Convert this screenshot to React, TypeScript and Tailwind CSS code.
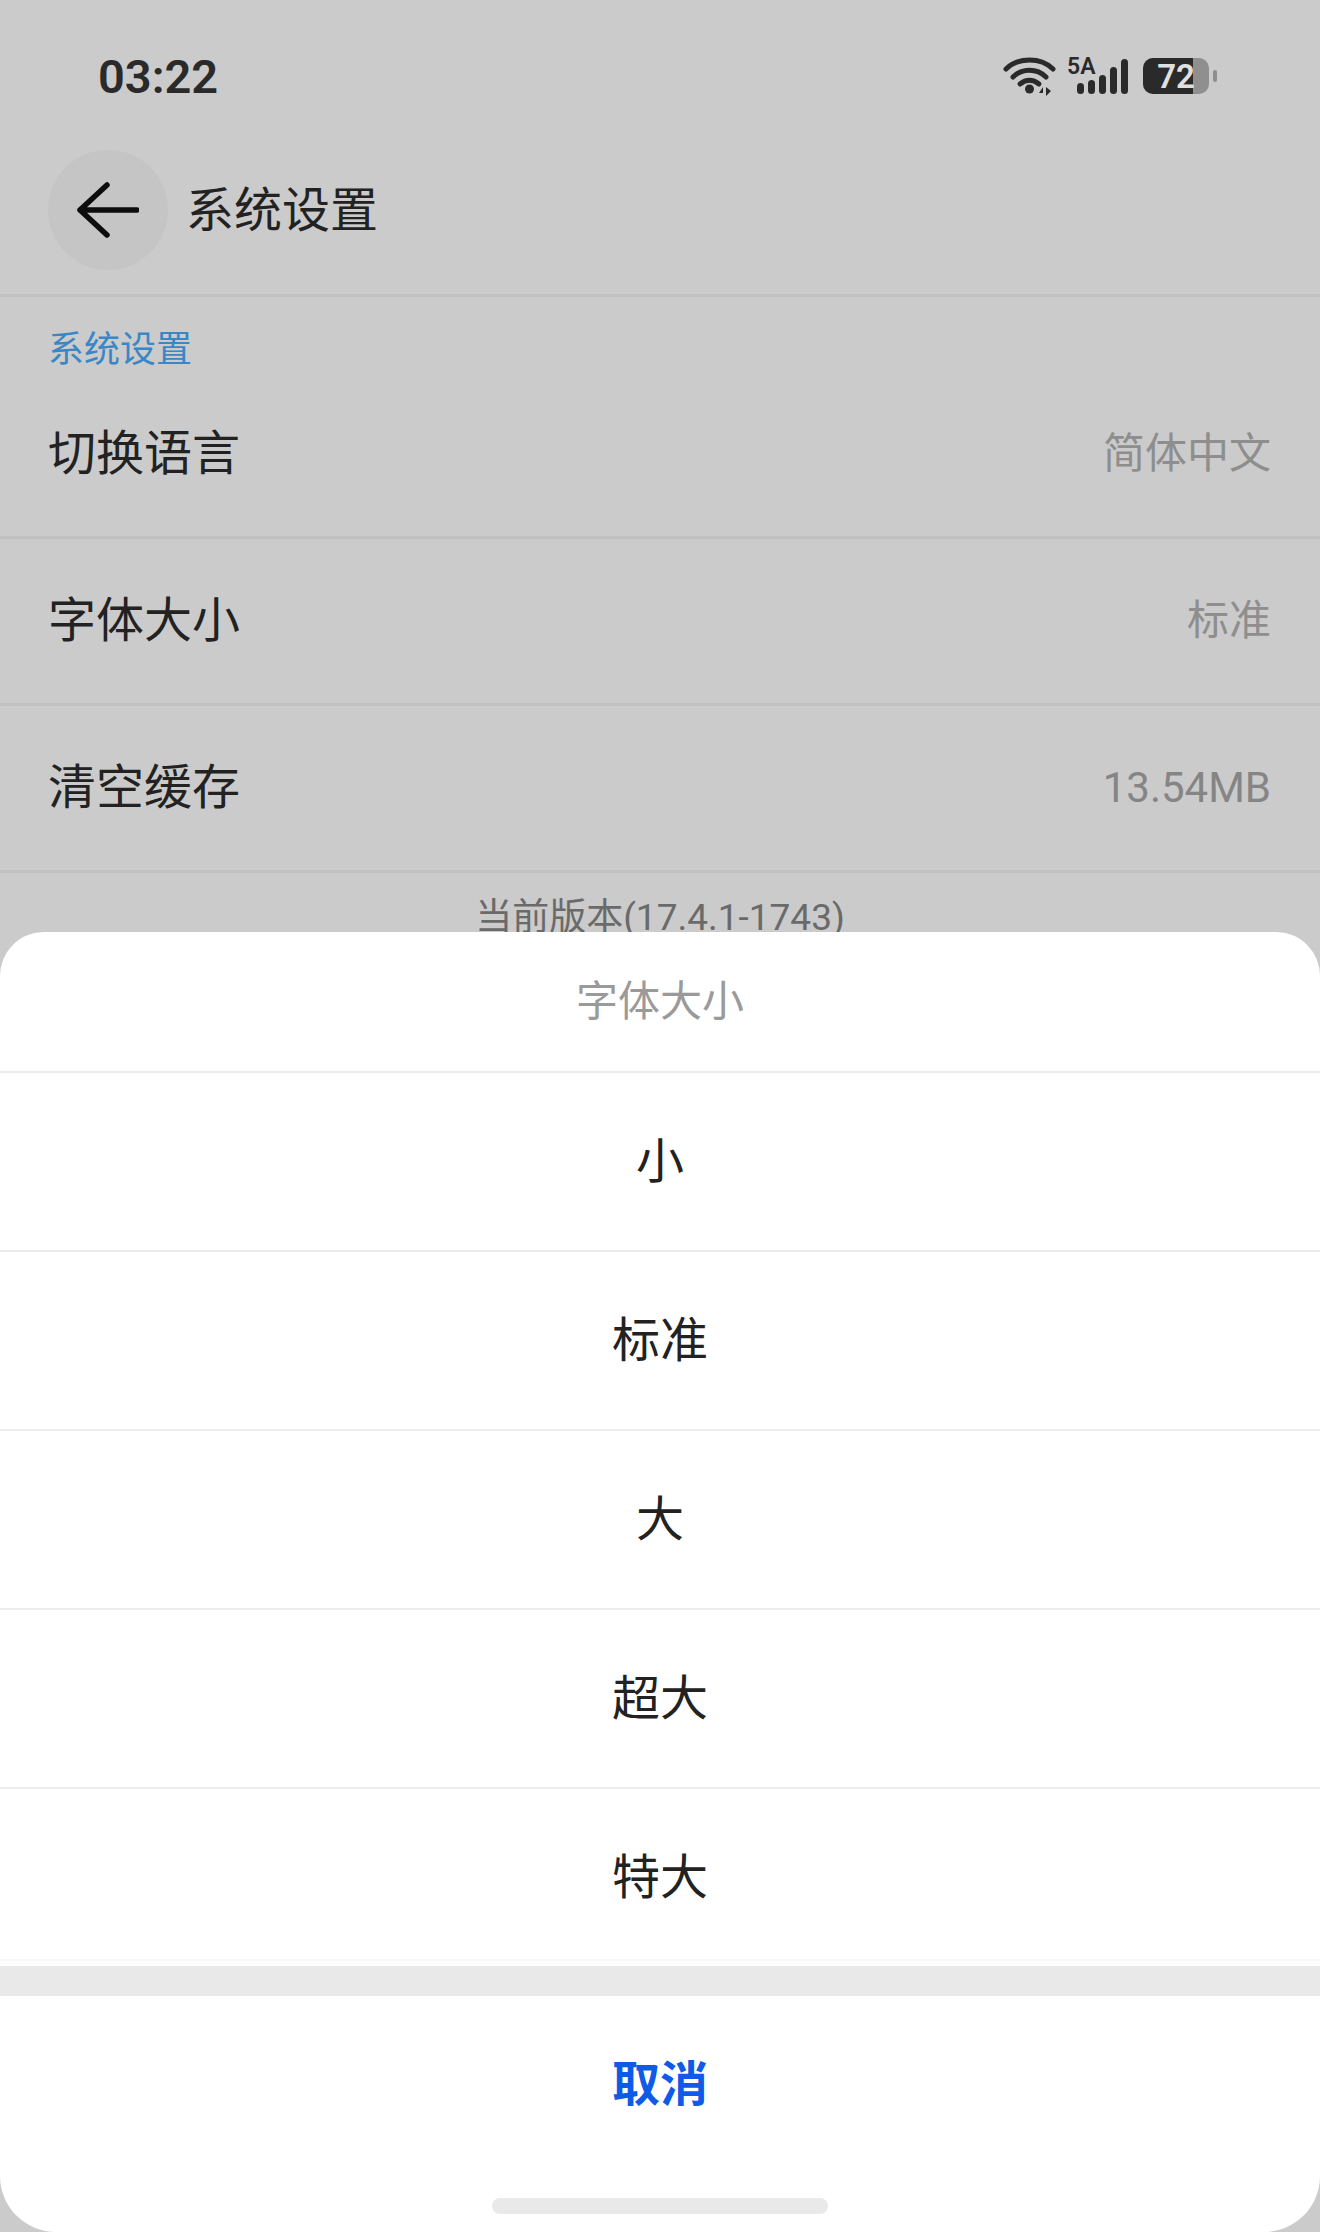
const cjk = "font-['Roboto','Noto_Sans_CJK_SC',sans-serif]";

function Wifi() {
  return (
    <svg width="54" height="40" viewBox="0 0 54 40" fill="none" className="block">
      <path d="M3 13 C15 1 38 1 50 13" stroke="#2a2a2a" strokeWidth="5" strokeLinecap="round" />
      <path d="M10 21 C19 12 34 12 43 21" stroke="#2a2a2a" strokeWidth="5" strokeLinecap="round" />
      <path d="M17 28 C23 23 30 23 36 28" stroke="#2a2a2a" strokeWidth="5" strokeLinecap="round" />
      <circle cx="26.5" cy="33" r="4.5" fill="#2a2a2a" />
      <path d="M36 37 L40 31 V37 Z M43 31 V40 L48 35 Z" fill="#2a2a2a" />
    </svg>
  );
}

function Signal() {
  const bars = [{ h: 11 }, { h: 14 }, { h: 19 }, { h: 27 }, { h: 35 }];
  return (
    <div className="relative w-[58px] h-[36px] flex items-end gap-[4px] justify-end">
      <span className="absolute left-[-3px] top-[-2px] text-[23px] leading-[22px] font-semibold text-[#2a2a2a] font-['Roboto',sans-serif]">5A</span>
      {bars.map((b, i) => (
        <div key={i} className="w-[7px] rounded-full bg-[#2a2a2a]" style={{ height: b.h }} />
      ))}
    </div>
  );
}

function Battery() {
  return (
    <div className="flex items-center gap-[4px]">
      <div className="relative w-[66px] h-[36px] rounded-[10px] overflow-hidden bg-[#8f8f8f] flex">
        <div className="w-[50px] h-full bg-[#2a2a2a]" />
        <span className="absolute inset-0 flex items-center justify-center text-[33px] font-semibold text-[#e0e0e0] font-['Roboto',sans-serif] leading-none">72</span>
      </div>
      <div className="w-[4px] h-[12px] rounded-full bg-[#8f8f8f]" />
    </div>
  );
}

function SettingRow({ label, value, h, latin }: { label: string; value: string; h: string; latin?: boolean }) {
  return (
    <div className={`${h} flex items-center justify-between pl-[48px] pr-[49px] border-b-[3px] border-[#c1c1c1]`}>
      <span className="text-[48px] leading-none text-[#222222]">{label}</span>
      <span className={`${latin ? "text-[42px] text-[#858585]" : "text-[42px] text-[#8e8e8e]"} leading-none`}>{value}</span>
    </div>
  );
}

function Option({ text, className = "h-[179px] border-[#ececec]" }: { text: string; className?: string }) {
  return (
    <div className={`${className} flex items-center justify-center border-b-2 text-[48px] leading-none text-[#222222]`}>
      {text}
    </div>
  );
}

export default function App() {
  return (
    <div className={`relative w-[1320px] h-[2232px] overflow-hidden bg-[#cbcbcb] ${cjk}`}>
      <div className="h-[150px] flex items-center justify-between pl-[98px] pr-[103px] pt-[2px]">
        <span className="pt-[1px] text-[47px] leading-none font-semibold text-[#2a2a2a]">03:22</span>
        <div className="flex items-center">
          <Wifi />
          <div className="w-[13px]" />
          <Signal />
          <div className="w-[15px]" />
          <Battery />
        </div>
      </div>
      <div className="h-[147px] flex items-start pl-[48px] gap-[18px] border-b-[3px] border-[#c1c1c1]">
        <div className="w-[120px] h-[120px] rounded-full bg-[#c5c5c5] flex items-center justify-center">
          <svg width="62" height="56" viewBox="0 0 62 56" fill="none">
            <path d="M60 28 H3 M30 3 L3 28 L30 53" stroke="#0d0d0d" strokeWidth="5.5" strokeLinecap="round" strokeLinejoin="round" />
          </svg>
        </div>
        <span className="text-[48px] leading-[122px] text-[#222222]">系统设置</span>
      </div>
      <div className="h-[88px] flex items-center pl-[48px] pt-[18px]">
        <span className="text-[36px] leading-none text-[#3a87c6]">系统设置</span>
      </div>
      <SettingRow label="切换语言" value="简体中文" h="h-[154px] pb-[13px]" />
      <SettingRow label="字体大小" value="标准" h="h-[167px]" />
      <SettingRow label="清空缓存" value="13.54MB" h="h-[167px]" latin />
      <div className="h-[80px] flex justify-center pt-[26px] text-[37px] leading-none text-[#6a6a6a]">
        当前版本(17.4.1-1743)
      </div>

      <div className="absolute left-0 right-0 top-[932px] bottom-0 bg-white rounded-t-[44px] rounded-b-[56px] flex flex-col">
        <div className="h-[141px] flex items-center justify-center border-b-2 border-[#ececec] text-[42px] leading-none text-[#9a9a9a]">
          字体大小
        </div>
        <Option text="小" />
        <Option text="标准" />
        <Option text="大" />
        <Option text="超大" />
        <Option text="特大" className="h-[172px] pt-[8px] border-[#f8f8f8]" />
        <div className="h-[5px] shrink-0" />
        <div className="h-[30px] shrink-0 bg-[#e9e9e9]" />
        <div className="flex-1 relative flex justify-center pt-[61px]">
          <span className="text-[48px] leading-[56px] font-bold text-[#0f5ae6]">取消</span>
          <div className="absolute left-[492px] top-[202px] w-[336px] h-[16px] rounded-[8px] bg-[#e9e9e9]" />
        </div>
      </div>
    </div>
  );
}
